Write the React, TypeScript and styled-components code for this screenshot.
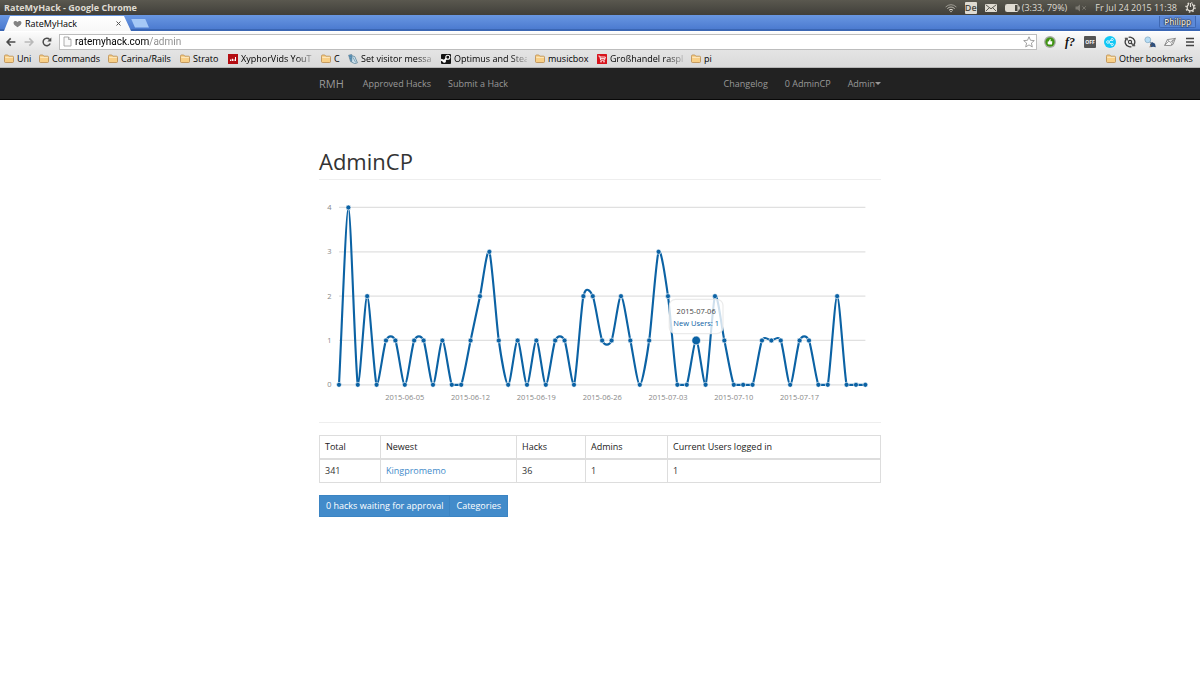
import React from 'react';
import styled, { createGlobalStyle, css } from 'styled-components';

const GlobalStyle = createGlobalStyle`
  * { box-sizing: border-box; }
  body {
    margin: 0;
    background: #fff;
    color: #333;
    font-family: 'Open Sans', 'Noto Sans', sans-serif;
    font-size: 9px;
    line-height: 12px;
  }
  button, input { font: inherit; color: inherit; }
  a { text-decoration: none; }
`;

/* ---------- desktop panel ---------- */

const Panel = styled.header`
  display: flex;
  align-items: center;
  justify-content: space-between;
  height: 15px;
  padding: 0 4px;
  background: linear-gradient(#5a584f, #403f3a);
  color: #dfdbd2;
`;

const WindowTitle = styled.span`
  font-weight: 700;
`;

const Tray = styled.div`
  display: flex;
  align-items: center;
  gap: 8px;
  white-space: nowrap;
`;

const TrayGroup = styled.span`
  display: flex;
  align-items: center;
  gap: 2px;
`;

const LanguageBadge = styled.span`
  width: 12px;
  height: 12px;
  border-radius: 1px;
  background: #dfdbd2;
  color: #4a4842;
  font-weight: 600;
  text-align: center;
`;

/* ---------- browser chrome ---------- */

const TabStrip = styled.div`
  display: flex;
  align-items: flex-end;
  height: 16px;
  padding: 0 4px;
  background: linear-gradient(#6997e2, #4c7bd0 88%, #3a66b4 89%);
`;

const Tab = styled.div`
  display: flex;
  align-items: center;
  gap: 3px;
  width: 127px;
  height: 15px;
  padding: 0 10px 0 9px;
  background: linear-gradient(#fff, #f7f7f7);
  clip-path: polygon(6px 0, 120px 0, 127px 100%, 0 100%);
  color: #000;
  font-weight: 500;
`;

const TabTitle = styled.span`
  flex: 1;
`;

const IconButton = styled.button`
  display: flex;
  flex: none;
  align-items: center;
  justify-content: center;
  padding: 0;
  border: 0;
  background: none;
`;

const NewTab = styled.button`
  align-self: center;
  width: 18px;
  height: 9px;
  padding: 0;
  border: 0;
  background: #a5c8f6;
  clip-path: polygon(0 0, 14px 0, 100% 100%, 4px 100%);
`;

const Profile = styled.button`
  align-self: flex-start;
  height: 12px;
  margin: 1px 0 0 auto;
  padding: 0 4px;
  border: 1px solid #3f68b3;
  border-top: 0;
  border-radius: 0 0 2px 2px;
  background: #5c89d8;
  color: #e4e4e4;
  font-size: 8px;
  font-weight: 600;
  line-height: 10px;
  text-shadow: 0 0 1px #222, 0 0 1px #222, 0 0 2px #222;
`;

const Toolbar = styled.div`
  display: flex;
  align-items: center;
  gap: 7px;
  height: 19px;
  padding: 1px 4px 0 6px;
  border-top: 1px solid #fff;
  background: linear-gradient(#fcfcfc, #e6e6e6);
`;

const NavButtons = styled.div`
  display: flex;
  gap: 8px;
`;

const Extensions = styled.div`
  display: flex;
  gap: 8px;
`;

const AddressBar = styled.div`
  display: flex;
  flex: 1;
  align-items: center;
  gap: 3px;
  height: 16px;
  padding: 0 1px 0 3px;
  border: 1px solid #bdbdbd;
  background: #fff;
`;

const AddressInput = styled.input`
  flex: 1;
  min-width: 0;
  height: 14px;
  padding: 0;
  border: 0;
  outline: 0;
  background: linear-gradient(90deg, #000 74px, #8a8a8a 74px);
  background-clip: text;
  -webkit-text-fill-color: transparent;
  font-family: Roboto, 'Open Sans', sans-serif;
  font-size: 10px;
`;

const BookmarkBar = styled.nav`
  display: flex;
  align-items: center;
  gap: 8px;
  height: 18px;
  padding: 0 4px;
  border-bottom: 1px solid #b5b5b5;
  background: linear-gradient(#e4e4e4, #dadada);
`;

const Bookmark = styled.a<{ $width: number; $faded?: boolean; $last?: boolean }>`
  display: flex;
  flex: none;
  align-items: center;
  gap: 3px;
  width: ${(p) => p.$width}px;
  color: #000;
  font-weight: 500;
  white-space: nowrap;
  ${(p) => p.$last && css`margin-left: auto;`}
  ${(p) => p.$faded && css`mask-image: linear-gradient(90deg, #000 80%, #0003);`}
  svg { flex: none; }
`;

/* ---------- page ---------- */

const Container = styled.div`
  width: 100%;
  max-width: 562px;
  margin: 0 auto;
`;

const SiteBar = styled.nav`
  background: #222;
  border-bottom: 1px solid #080808;
`;

const SiteBarInner = styled(Container)`
  display: flex;
  align-items: center;
  gap: 17px;
  height: 31px;
  white-space: nowrap;
`;

const Brand = styled.a`
  margin-right: 2px;
  color: #999;
  font-size: 11px;
`;

const SiteLink = styled.a<{ $push?: boolean }>`
  margin-left: ${(p) => (p.$push ? 'auto' : '0')};
  color: #999;
`;

const SiteMenu = styled.button`
  display: flex;
  align-items: center;
  padding: 0;
  border: 0;
  background: none;
  color: #999;
`;

const Caret = styled.span`
  border: 3px solid transparent;
  border-top-color: currentColor;
  border-bottom: 0;
`;

const Title = styled.h1`
  margin: 49px 0 15px;
  padding-bottom: 6px;
  border-bottom: 1px solid #eee;
  font-size: 22px;
  font-weight: 400;
  line-height: 24px;
`;

const Chart = styled.svg`
  display: block;
  width: 100%;
  font-size: 12px;
`;

const Rule = styled.hr`
  height: 1px;
  margin: 11px 0 12px;
  border: 0;
  background: #eee;
`;

const StatsTable = styled.table`
  width: 100%;
  border: 1px solid #ddd;
  border-collapse: collapse;
  table-layout: fixed;
`;

const Column = styled.col<{ $width?: number }>`
  width: ${(p) => (p.$width ? `${p.$width}px` : 'auto')};
`;

const HeadCell = styled.th`
  padding: 5px;
  border: 1px solid #ddd;
  border-bottom-width: 2px;
  color: #222;
  font-weight: 500;
  text-align: left;
`;

const Cell = styled.td`
  padding: 5px;
  border: 1px solid #ddd;
`;

const UserLink = styled.a`
  color: #428bca;
`;

const ButtonGroup = styled.div`
  display: flex;
  margin-top: 12px;
`;

const ActionButton = styled.button`
  height: 22px;
  padding: 0 6px;
  border: 1px solid #3b84c3;
  background: #428bca;
  color: #fff;
  & + & { border-left: 0; }
`;

/* ---------- icons ---------- */

const Folder = () => (
  <svg width="10" height="10" viewBox="0 0 10 10">
    <path d="M.5 2.2Q.5 1 1.5 1h2.3l1 1.2h3.7q1 0 1 1v4.3q0 1-1 1h-7q-1 0-1-1z" fill="#f8cf86" stroke="#b98a4c" strokeWidth=".8" />
    <path d="M1.2 3.4h7.6" stroke="#fdebc6" strokeWidth=".9" />
  </svg>
);

const StatsIcon = () => (
  <svg width="10" height="10" viewBox="0 0 10 10">
    <rect width="10" height="10" fill="#b40d12" />
    <path d="M2 7V5.6h1.2V7zM3.8 7V4.8H5V7zM5.5 7V5.2h1V7zM7 7V3h1v4z" fill="#fff" />
  </svg>
);

const NotebookIcon = () => (
  <svg width="10" height="10" viewBox="0 0 10 10">
    <path d="M.6 1.2 3.6.4 5.400 6.800 2.600 7.600z" fill="#5f9cc6" stroke="#43677f" strokeWidth=".5" />
    <path d="M4 1.800 6.800 2.600 9.400 8.800 6.800 9.600 3.600 8.200z" fill="#cfe3ef" stroke="#4d7891" strokeWidth=".7" />
    <path d="m5 3.400 2.600 5M1.300 2.600l1.800-.5M1.800 4.600l1.800-.5" stroke="#4d7891" strokeWidth=".6" />
  </svg>
);

const SteamIcon = () => (
  <svg width="10" height="10" viewBox="0 0 10 10">
    <rect width="10" height="10" rx="1" fill="#151515" />
    <path d="m0 5.600 3.200 1.400 2.400-3" stroke="#fff" strokeWidth="2" fill="none" />
    <circle cx="6.800" cy="3.200" r="2" fill="#151515" stroke="#fff" strokeWidth="1.100" />
    <circle cx="3.300" cy="7.200" r="1.500" fill="#fff" />
  </svg>
);

const CartIcon = () => (
  <svg width="10" height="10" viewBox="0 0 10 10">
    <rect width="10" height="10" rx=".6" fill="#d8131c" />
    <path d="M1.4 2h1.3l1 4.2h3.8L8.4 3H3M3.4 4.6h4.4" fill="none" stroke="#fff" strokeWidth=".9" />
    <circle cx="4" cy="7.8" r=".8" fill="#fff" />
    <circle cx="7" cy="7.8" r=".8" fill="#fff" />
  </svg>
);

const WifiIcon = () => (
  <svg width="12" height="10" viewBox="0 0 12 10" fill="none" stroke="#dfdbd2" strokeWidth="1">
    <path d="M.6 4Q6-.6 11.4 4" opacity=".55" />
    <path d="M2.3 5.6Q6 2.4 9.7 5.6" opacity=".75" />
    <path d="M4 7.2Q6 5.4 8 7.2" />
    <circle cx="6" cy="8.5" r=".7" fill="#dfdbd2" stroke="none" />
  </svg>
);

const MailIcon = () => (
  <svg width="12" height="8" viewBox="0 0 12 8">
    <rect width="12" height="8" rx=".6" fill="#dfdbd2" />
    <path d="m.8.8 5.2 4 5.2-4M.8 7.200l3.400-3.400M11.200 7.200 7.800 3.800" fill="none" stroke="#4a4842" strokeWidth=".9" />
  </svg>
);

const BatteryIcon = () => (
  <svg width="15" height="8" viewBox="0 0 15 8">
    <rect x=".5" y=".5" width="12.5" height="7" rx="1" fill="none" stroke="#dfdbd2" />
    <rect x="1" y="1" width="9" height="6" fill="#dfdbd2" />
    <path d="M14 2.5v3" stroke="#dfdbd2" strokeWidth="1.4" />
  </svg>
);

const MutedIcon = () => (
  <svg width="12" height="8" viewBox="0 0 12 8">
    <path d="M.5 2.600h2L5 .4v7.200L2.500 5.400h-2z" fill="#7d7a72" />
    <path d="m7.400 2.300 3.400 3.400m0-3.400L7.400 5.700" stroke="#7d7a72" />
  </svg>
);

const GearIcon = () => (
  <svg width="11" height="11" viewBox="0 0 11 11" fill="none" stroke="#dfdbd2">
    <circle cx="5.5" cy="5.5" r="3.3" strokeWidth="1.2" />
    <circle cx="5.5" cy="5.5" r="4.5" strokeWidth="1.5" strokeDasharray="1.5 2.034" />
    <path d="M5.5 1.500v3" stroke="#4a4842" strokeWidth="3" />
    <path d="M5.5 1v4" strokeWidth="1.2" />
  </svg>
);

const HeartIcon = () => (
  <svg width="9" height="8" viewBox="0 0 10 8">
    <path d="M5 7.600C2 5.800.6 4.400.6 2.600.6.4 3.600-.2 5 1.700 6.400-.2 9.400.4 9.400 2.600 9.400 4.400 8 5.800 5 7.600z" fill="#848484" />
  </svg>
);

const CloseIcon = () => (
  <svg width="5" height="5" viewBox="0 0 5 5">
    <path d="m.5.5 4 4m0-4-4 4" stroke="#555" />
  </svg>
);

const ArrowIcon = ({ forward = false }: { forward?: boolean }) => (
  <svg width="10" height="10" viewBox="0 0 10 10" fill="none" stroke={forward ? '#b9b9b9' : '#4b4b4b'} strokeWidth="1.6">
    {forward ? <path d="M.6 5h8M5.300 1.400 8.900 5 5.300 8.600" /> : <path d="M9.400 5h-8M4.700 1.400 1.100 5l3.600 3.600" />}
  </svg>
);

const ReloadIcon = () => (
  <svg width="10" height="10" viewBox="0 0 10 10">
    <path d="M8.200 6.500A3.700 3.700 0 1 1 7.600 2.500" fill="none" stroke="#4b4b4b" strokeWidth="1.5" />
    <path d="M9.300.6v4H5.300z" fill="#4b4b4b" />
  </svg>
);

const PageIcon = () => (
  <svg width="9" height="11" viewBox="0 0 9 11">
    <path d="M1 1h4.500L8 3.500V10H1zM5.500 1v2.500H8" fill="#fafafa" stroke="#9a9a9a" strokeWidth=".8" />
  </svg>
);

const StarIcon = () => (
  <svg width="12" height="12" viewBox="0 0 12 12">
    <path d="m6 .8 1.500 3.500 3.800.3-2.900 2.500.9 3.800L6 8.900l-3.300 2 .9-3.800L.7 4.600l3.800-.3z" fill="#fff" stroke="#8a8a8a" strokeWidth=".8" />
  </svg>
);

const ThumbIcon = () => (
  <svg width="12" height="12" viewBox="0 0 12 12">
    <circle cx="6" cy="6" r="5.9" fill="#a5a9a2" />
    <circle cx="6" cy="6" r="4.6" fill="#3f9412" />
    <path d="M3.700 5.600h1L6 2.900q1 .1.700 1.100l-.3 1.200h1.900l-.3 3.200H4.800l-1.100-.3z" fill="#fff" />
  </svg>
);

const FontFinder = styled.span`
  width: 12px;
  color: #111;
  font: italic 700 12px/12px 'Liberation Serif', serif;
`;

const OffBadge = styled.span`
  width: 12px;
  height: 12px;
  border-radius: 1px;
  background: #555;
  color: #fff;
  font-size: 5px;
  font-weight: 700;
  line-height: 12px;
  text-align: center;
`;

const ShareIcon = () => (
  <svg width="12" height="12" viewBox="0 0 12 12">
    <circle cx="6" cy="6" r="6" fill="#12c8f5" />
    <path d="M8.200 3.500 4 6l4.200 2.500" fill="none" stroke="#fff" strokeWidth=".8" />
    <g fill="#12c8f5" stroke="#fff" strokeWidth=".8">
      <circle cx="8.2" cy="3.5" r="1.1" />
      <circle cx="3.9" cy="6" r="1.3" />
      <circle cx="8.2" cy="8.5" r="1.1" />
    </g>
  </svg>
);

const SyncIcon = () => (
  <svg width="12" height="12" viewBox="0 0 12 12" fill="none" stroke="#3c3c3c">
    <path d="M5 10.700A4.800 4.800 0 0 1 2.400 2.800M7 1.300A4.800 4.800 0 0 1 9.600 9.200" strokeWidth="1.3" />
    <path d="M.8 2.300h2.400v2.300M11.200 9.700H8.800V7.400" strokeWidth="1.100" />
    <path d="M4.600 1.400A4.800 4.800 0 0 1 7 1.300M7.400 10.600A4.800 4.800 0 0 1 5 10.700" strokeWidth="1.3" />
    <circle cx="6" cy="6" r="1.6" strokeWidth="1.1" />
    <path d="m7 7 1.300 1.300" strokeWidth="1.1" />
  </svg>
);

const InspectIcon = () => (
  <svg width="12" height="12" viewBox="0 0 12 12">
    <path d="m6 6 2 2" stroke="#8796a4" strokeWidth="1.4" />
    <circle cx="3.8" cy="3.8" r="2.9" fill="#b6ddf5" stroke="#8fb3cc" strokeWidth=".9" />
    <path d="M6 8.400 8 6l3 1.700.8 3.600-2.600-.6-2.600.6z" fill="#2f4f7c" />
    <path d="m5.600 10.800 2-1.800" stroke="#8b5e34" />
  </svg>
);

const LetterIcon = () => (
  <svg width="12" height="12" viewBox="0 0 12 12">
    <path d="M.6 9.400 3.400 3.600l8-1.200L9 8.400 6.600 9.600z" fill="#f6f6f6" stroke="#777" strokeWidth=".8" />
    <path d="m3.400 3.600 2.800 2.800 5.200-4M.6 9.400l4.200-4.200M7 9.400 9.400 4" fill="none" stroke="#777" strokeWidth=".7" />
  </svg>
);

const MenuIcon = () => (
  <svg width="12" height="12" viewBox="0 0 12 12">
    <path d="M2 2.500h8M2 6h8M2 9.500h8" stroke="#444" strokeWidth="1.6" />
  </svg>
);

/* ---------- data ---------- */

const bookmarks = [
  { label: 'Uni', width: 27, icon: <Folder /> },
  { label: 'Commands', width: 61, icon: <Folder /> },
  { label: 'Carina/Rails', width: 64, icon: <Folder /> },
  { label: 'Strato', width: 40, icon: <Folder /> },
  { label: 'XyphorVids YouT', width: 85, icon: <StatsIcon />, faded: true },
  { label: 'C', width: 19, icon: <Folder /> },
  { label: 'Set visitor messa', width: 85, icon: <NotebookIcon />, faded: true },
  { label: 'Optimus and Stea', width: 86, icon: <SteamIcon />, faded: true },
  { label: 'musicbox', width: 54, icon: <Folder /> },
  { label: 'Großhandel raspl', width: 86, icon: <CartIcon />, faded: true },
  { label: 'pi', width: 22, icon: <Folder /> },
];

const newUsers = [
  0, 4, 0, 2, 0, 1, 1, 0, 1, 1, 0, 1, 0, 0, 1, 2, 3, 1, 0, 1, 0, 1, 0, 1, 1, 0, 2, 2, 1,
  1, 2, 1, 0, 1, 3, 2, 0, 0, 1, 0, 2, 1, 0, 0, 0, 1, 1, 1, 0, 1, 1, 0, 0, 2, 0, 0, 0,
];

const weekLabels = [
  { day: 7, text: '2015-06-05' },
  { day: 14, text: '2015-06-12' },
  { day: 21, text: '2015-06-19' },
  { day: 28, text: '2015-06-26' },
  { day: 35, text: '2015-07-03' },
  { day: 42, text: '2015-07-10' },
  { day: 49, text: '2015-07-17' },
];

const HOVERED_DAY = 38;
const LEFT = 32;
const RIGHT = 875;
const BOTTOM = 304;
const STEP_Y = 71;

const xOf = (day: number) => LEFT + (day * (RIGHT - LEFT)) / (newUsers.length - 1);
const yOf = (value: number) => BOTTOM - value * STEP_Y;

/* Smooth curve through the points; control points never dip under the axis. */
function smoothPath(points: { x: number; y: number }[]) {
  const slopes = points.map((_, i) => {
    const a = points[Math.max(0, i - 1)];
    const b = points[Math.min(points.length - 1, i + 1)];
    return (b.y - a.y) / (b.x - a.x);
  });
  return points
    .map((p, i) => {
      if (i === 0) return `M${p.x},${p.y}`;
      const prev = points[i - 1];
      const dx = (p.x - prev.x) / 4;
      const y1 = Math.min(BOTTOM, prev.y + dx * slopes[i - 1]);
      const y2 = Math.min(BOTTOM, p.y - dx * slopes[i]);
      return `C${prev.x + dx},${y1},${p.x - dx},${y2},${p.x},${p.y}`;
    })
    .join('');
}

function UsersChart() {
  const points = newUsers.map((value, day) => ({ x: xOf(day), y: yOf(value) }));
  return (
    <Chart viewBox="0 0 900 346" role="img" aria-label="New users per day">
      {[0, 1, 2, 3, 4].map((v) => (
        <g key={v}>
          <path d={`M${LEFT},${yOf(v)}H${RIGHT}`} stroke="#e0e0e0" strokeWidth="2" />
          <text x="20" y={yOf(v) + 4} textAnchor="end" fill="#888">{v}</text>
        </g>
      ))}
      {weekLabels.map((w) => (
        <text key={w.day} x={xOf(w.day)} y="328" textAnchor="middle" fill="#888">{w.text}</text>
      ))}
      <path d={smoothPath(points)} fill="none" stroke="#0b62a4" strokeWidth="3.4" />
      {points.map((p, i) => (
        <circle key={i} cx={p.x} cy={p.y} r={i === HOVERED_DAY ? 7 : 4} fill="#0b62a4" stroke="#fff" />
      ))}
      <rect x="561" y="167" width="86" height="55" rx="10" fill="#fff" fillOpacity=".8" stroke="#e6e6e6" strokeOpacity=".8" strokeWidth="2" />
      <text x="604" y="190" textAnchor="middle" fill="#444" fontWeight="500">2015-07-06</text>
      <text x="604" y="210" textAnchor="middle" fill="#0b62a4">New Users: 1</text>
    </Chart>
  );
}

export default function App() {
  return (
    <>
      <GlobalStyle />
      <Panel>
        <WindowTitle>RateMyHack - Google Chrome</WindowTitle>
        <Tray>
          <WifiIcon />
          <LanguageBadge>De</LanguageBadge>
          <MailIcon />
          <TrayGroup>
            <BatteryIcon />
            <span>(3:33, 79%)</span>
          </TrayGroup>
          <MutedIcon />
          <span>Fr Jul 24 2015 11:38</span>
          <GearIcon />
        </Tray>
      </Panel>

      <TabStrip>
        <Tab>
          <HeartIcon />
          <TabTitle>RateMyHack</TabTitle>
          <IconButton aria-label="Close tab"><CloseIcon /></IconButton>
        </Tab>
        <NewTab aria-label="New tab" />
        <Profile>Philipp</Profile>
      </TabStrip>

      <Toolbar>
        <NavButtons>
          <IconButton aria-label="Back"><ArrowIcon /></IconButton>
          <IconButton aria-label="Forward"><ArrowIcon forward /></IconButton>
          <IconButton aria-label="Reload"><ReloadIcon /></IconButton>
        </NavButtons>
        <AddressBar>
          <PageIcon />
          <AddressInput aria-label="Address" defaultValue="ratemyhack.com/admin" />
          <IconButton aria-label="Bookmark this page"><StarIcon /></IconButton>
        </AddressBar>
        <Extensions>
          <IconButton aria-label="Adblock"><ThumbIcon /></IconButton>
          <IconButton aria-label="Font finder"><FontFinder>f?</FontFinder></IconButton>
          <IconButton aria-label="Toggle"><OffBadge>OFF</OffBadge></IconButton>
          <IconButton aria-label="Share"><ShareIcon /></IconButton>
          <IconButton aria-label="Sync"><SyncIcon /></IconButton>
          <IconButton aria-label="Inspect"><InspectIcon /></IconButton>
          <IconButton aria-label="Mail"><LetterIcon /></IconButton>
          <IconButton aria-label="Menu"><MenuIcon /></IconButton>
        </Extensions>
      </Toolbar>

      <BookmarkBar>
        {bookmarks.map((b) => (
          <Bookmark key={b.label} href="#" $width={b.width} $faded={b.faded}>
            {b.icon}
            {b.label}
          </Bookmark>
        ))}
        <Bookmark href="#" $width={90} $last>
          <Folder />
          Other bookmarks
        </Bookmark>
      </BookmarkBar>

      <SiteBar>
        <SiteBarInner>
          <Brand href="#">RMH</Brand>
          <SiteLink href="#">Approved Hacks</SiteLink>
          <SiteLink href="#">Submit a Hack</SiteLink>
          <SiteLink href="#" $push>Changelog</SiteLink>
          <SiteLink href="#">0 AdminCP</SiteLink>
          <SiteMenu>Admin<Caret /></SiteMenu>
        </SiteBarInner>
      </SiteBar>

      <Container as="main">
        <Title>AdminCP</Title>
        <UsersChart />
        <Rule />
        <StatsTable>
          <colgroup>
            <Column $width={61} />
            <Column $width={136} />
            <Column $width={69} />
            <Column $width={82} />
            <Column />
          </colgroup>
          <thead>
            <tr>
              <HeadCell>Total</HeadCell>
              <HeadCell>Newest</HeadCell>
              <HeadCell>Hacks</HeadCell>
              <HeadCell>Admins</HeadCell>
              <HeadCell>Current Users logged in</HeadCell>
            </tr>
          </thead>
          <tbody>
            <tr>
              <Cell>341</Cell>
              <Cell><UserLink href="#">Kingpromemo</UserLink></Cell>
              <Cell>36</Cell>
              <Cell>1</Cell>
              <Cell>1</Cell>
            </tr>
          </tbody>
        </StatsTable>
        <ButtonGroup>
          <ActionButton>0 hacks waiting for approval</ActionButton>
          <ActionButton>Categories</ActionButton>
        </ButtonGroup>
      </Container>
    </>
  );
}
